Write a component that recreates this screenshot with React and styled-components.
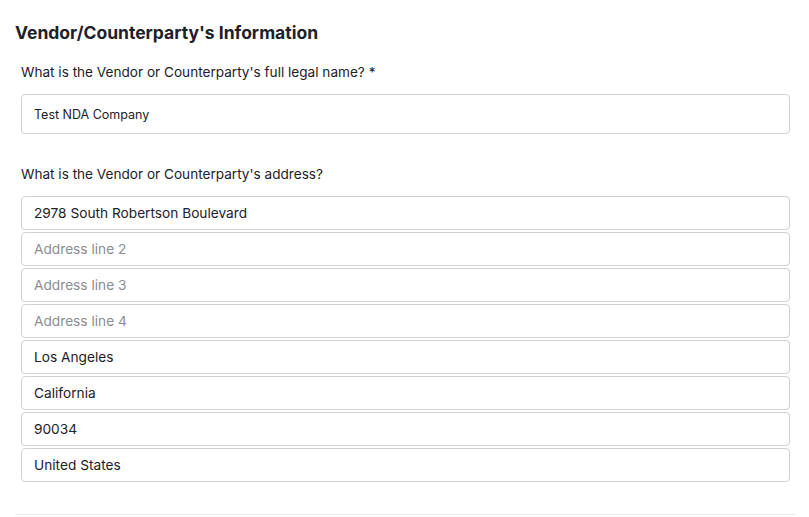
import React from "react";
import styled, { createGlobalStyle } from "styled-components";

const GlobalStyle = createGlobalStyle`
  body {
    margin: 0;
    background: #ffffff;
    font-family: Inter, "Noto Sans", "Liberation Sans", sans-serif;
    color: #1d2129;
  }
`;

const addressLines = [
  { value: "2978 South Robertson Boulevard" },
  { placeholder: "Address line 2" },
  { placeholder: "Address line 3" },
  { placeholder: "Address line 4" },
  { value: "Los Angeles" },
  { value: "California" },
  { value: "90034" },
  { value: "United States" },
];

const App = () => {
  return (
    <>
      <GlobalStyle />
      <Page>
        <Title>Vendor/Counterparty's Information</Title>
        <Fields>
          <Field>
            <Label>What is the Vendor or Counterparty's full legal name? *</Label>
            <NameInput defaultValue="Test NDA Company" />
          </Field>
          <Field>
            <Label>What is the Vendor or Counterparty's address?</Label>
            <AddressStack>
              {addressLines.map((line, i) => (
                <AddressInput
                  key={i}
                  defaultValue={line.value}
                  placeholder={line.placeholder}
                />
              ))}
            </AddressStack>
          </Field>
        </Fields>
        <Divider />
      </Page>
    </>
  );
};

export default App;

const Page = styled.div`
  width: 809px;
  height: 517px;
  padding: 22px 14px 0 15px;
  box-sizing: border-box;
  display: flex;
  flex-direction: column;
  overflow: hidden;
`;

const Title = styled.h2`
  margin: 0;
  font-size: 17.5px;
  font-weight: 700;
  line-height: 22px;
  color: #1d2129;
`;

const Fields = styled.div`
  display: flex;
  flex-direction: column;
  gap: 31px;
  padding: 0 5px 0 6px;
  margin-top: 19px;
`;

const Field = styled.div`
  display: flex;
  flex-direction: column;
`;

const Label = styled.label`
  font-size: 13.6px;
  line-height: 18px;
  color: #1d2129;
  margin-bottom: 13px;
`;

const BaseInput = styled.input`
  width: 100%;
  box-sizing: border-box;
  border: 1px solid #cfd1d4;
  border-radius: 4px;
  background: #fff;
  font-family: inherit;
  color: #1d2129;
  padding: 0 12px;
  outline: none;
  &::placeholder {
    color: #8a8d91;
  }
`;

const NameInput = styled(BaseInput)`
  height: 40px;
  font-size: 12.5px;
`;

const AddressStack = styled.div`
  display: flex;
  flex-direction: column;
  gap: 2px;
`;

const AddressInput = styled(BaseInput)`
  height: 34px;
  font-size: 13.7px;
`;

const Divider = styled.div`
  margin-top: auto;
  margin-bottom: 2px;
  width: 780px;
  border-bottom: 1px solid #ebebeb;
`;
